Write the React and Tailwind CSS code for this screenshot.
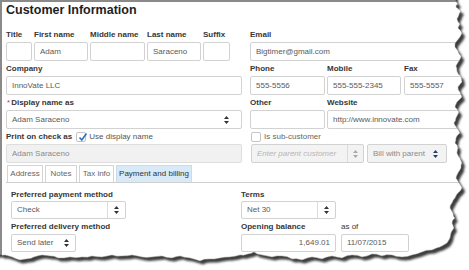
import React from "react";

const Arrows = ({ color = "#333" }) => (
  <svg width="5" height="8" viewBox="0 0 5 8">
    <path d="M2.5 0 L5 3 H0 Z M0 5 H5 L2.5 8 Z" fill={color} />
  </svg>
);

const Label = ({ children, className = "" }) => (
  <div className={"h-[11px] leading-[11px] text-[8px] font-bold text-[#363636] whitespace-nowrap " + className}>
    {children}
  </div>
);

const Input = ({ value = "", className = "", right = false }) => (
  <div
    className={
      "mt-[2px] h-[19px] border border-[#d2d2d2] rounded-[2px] px-[5px] flex items-center text-[8px] text-[#5a5a5a] whitespace-nowrap overflow-hidden " +
      (right ? "justify-end " : "") +
      className
    }
  >
    {value}
  </div>
);

const Field = ({ label, value, className = "", right }) => (
  <div className={"flex flex-col " + className}>
    <Label>{label}</Label>
    <Input value={value} right={right} />
  </div>
);

const Select = ({ value, className = "", sep = false, arrowW = "w-[17px]", arrowColor = "#333", textCls = "text-[#5a5a5a]", bg = "bg-white" }) => (
  <div className={"flex items-center border border-[#d2d2d2] rounded-[2px] overflow-hidden " + bg + " " + className}>
    <span className={"flex-1 pl-[5px] text-[8px] whitespace-nowrap " + textCls}>{value}</span>
    {sep && <div className="w-px self-stretch bg-[#dcdcdc]" />}
    <div className={"flex justify-center items-center " + arrowW}>
      <Arrows color={arrowColor} />
    </div>
  </div>
);

const Check = ({ checked }) => (
  <div className="w-[10px] h-[10px] border border-[#c4c4c4] rounded-[2px] bg-white relative">
    {checked && (
      <svg className="absolute left-[1px] top-[-1px]" width="10" height="10" viewBox="0 0 10 10">
        <path d="M1.5 5.5 L3.8 8 L8.5 1.5" stroke="#2f6fba" strokeWidth="1.6" fill="none" />
      </svg>
    )}
  </div>
);

const paperPts = [
  [455, 0], [458, 4], [456, 7], [461, 11], [459, 15], [457, 19], [460, 24], [458, 28], [462, 33], [460, 37],
  [456, 42], [455, 47], [458, 51], [461, 56], [459, 61], [456, 66], [457, 71], [461, 76], [462, 82], [458, 87],
  [460, 92], [462, 97], [457, 102], [455, 107], [459, 112], [456, 118], [454, 123], [457, 128], [460, 133],
  [456, 138], [455, 143], [458, 148], [457, 153], [460, 158], [462, 163], [461, 168], [458, 173], [456, 178],
  [459, 183], [462, 188], [458, 193], [455, 198], [452, 203], [450, 208], [453, 213], [455, 218], [452, 223],
  [454, 228], [451, 233], [450, 238], [447, 243], [440, 247], [432, 250], [422, 252], [412, 255], [402, 257],
  [392, 255], [382, 256], [372, 254], [362, 257], [352, 255], [342, 258], [332, 256], [322, 259], [312, 257],
  [302, 260], [292, 259], [282, 256], [272, 257], [262, 255], [254, 252], [248, 254], [240, 255], [230, 257],
  [220, 258], [210, 259], [200, 261], [190, 258], [180, 256], [172, 258], [162, 256], [152, 257], [142, 257],
  [132, 255], [122, 256], [112, 255], [102, 257], [92, 256], [82, 257], [70, 257], [58, 258], [50, 256],
  [42, 255], [34, 257], [26, 259], [20, 260], [12, 257], [5, 255], [0, 254],
];

function buildPath() {
  let seed = 7;
  const rnd = () => {
    seed = (seed * 9301 + 49297) % 233280;
    return seed / 233280 - 0.5;
  };
  const out = [];
  for (let i = 0; i < paperPts.length; i++) {
    const [x1, y1] = paperPts[i];
    out.push([x1, y1]);
    if (i < paperPts.length - 1) {
      const [x2, y2] = paperPts[i + 1];
      out.push([(x1 + x2) / 2 + rnd() * 1.6, (y1 + y2) / 2 + rnd() * 1.6]);
    }
  }
  let d = "M-6 -6 L455 -6 ";
  d += out.map(([x, y]) => `L${x.toFixed(1)} ${y.toFixed(1)}`).join(" ");
  d += " L-6 254 Z";
  return d;
}

const TornEdge = () => {
  const d = buildPath();
  return (
    <svg className="absolute left-0 top-0 pointer-events-none" width="469" height="270" viewBox="0 0 469 270">
      <defs>
        <mask id="outside">
          <rect x="0" y="0" width="469" height="270" fill="white" />
          <path d={d} fill="black" />
        </mask>
        <filter id="blur" x="-10%" y="-10%" width="120%" height="120%">
          <feGaussianBlur stdDeviation="1.3" />
        </filter>
      </defs>
      <g mask="url(#outside)">
        <rect x="0" y="0" width="469" height="270" fill="white" />
        <path d={d} fill="#3c3c3c" filter="url(#blur)" transform="translate(3 3.5)" />
      </g>
      <path d={d} fill="none" stroke="#9a9a9a" strokeWidth="0.5" />
    </svg>
  );
};

export default function App() {
  return (
    <div className="relative w-[469px] h-[270px] overflow-hidden bg-white [font-family:'Liberation_Sans',Arial,sans-serif]">
      <div className="h-full border-l-2 border-t-2 border-[#8a8a8a] pl-[4px] pt-[1px]">
        <div className="h-[15px] leading-[15px] text-[12.5px] font-bold text-[#1e1e1e] whitespace-nowrap">Customer Information</div>

        {/* Row 1 */}
        <div className="mt-[11px] flex">
          <div className="w-[236px] flex gap-[2px]">
            <Field label="Title" className="w-[26px]" />
            <Field label="First name" value="Adam" className="w-[54px]" />
            <Field label="Middle name" className="w-[55px]" />
            <Field label="Last name" value="Saraceno" className="w-[54px]" />
            <Field label="Suffix" className="w-[27px]" />
          </div>
          <Field label="Email" value="Bigtimer@gmail.com" className="ml-[8px] flex-1" />
        </div>

        {/* Row 2 */}
        <div className="mt-[2px] flex">
          <Field label="Company" value="InnoVate LLC" className="w-[236px]" />
          <div className="ml-[8px] flex-1 flex">
            <Field label="Phone" value="555-5556" className="w-[75px]" />
            <Field label="Mobile" value="555-555-2345" className="ml-[2px] w-[74px]" />
            <Field label="Fax" value="555-5557" className="ml-[3px] flex-1" />
          </div>
        </div>

        {/* Row 3 */}
        <div className="mt-[2px] flex">
          <div className="w-[236px] flex flex-col">
            <Label>
              <span className="text-[#d33] font-normal mr-[1px] ml-[1px]">*</span>Display name as
            </Label>
            <Select value="Adam Saraceno" className="mt-[2px] h-[19px]" arrowW="w-[30px]" />
          </div>
          <div className="ml-[8px] flex-1 flex">
            <Field label="Other" className="w-[75px]" />
            <Field label="Website" value="http://www.innovate.com" className="ml-[2px] flex-1" />
          </div>
        </div>

        {/* Row 4 */}
        <div className="mt-[2px] flex">
          <div className="w-[236px] flex flex-col">
            <div className="h-[11px] flex items-center">
              <Label>Print on check as</Label>
              <div className="ml-[4px]">
                <Check checked />
              </div>
              <span className="ml-[3px] text-[8px] text-[#555] leading-[11px]">Use display name</span>
            </div>
            <div className="mt-[2px] h-[19px] border border-[#dedede] rounded-[2px] bg-[#f1f1f1] px-[5px] flex items-center text-[8px] text-[#8a8a8a]">
              Adam Saraceno
            </div>
          </div>
          <div className="ml-[9px] flex flex-col">
            <div className="h-[11px] flex items-center">
              <Check />
              <span className="ml-[3px] text-[8px] text-[#666] leading-[11px]">Is sub-customer</span>
            </div>
            <div className="mt-[2px] h-[19px] flex">
              <Select
                value="Enter parent customer"
                className="w-[113px] h-full"
                sep
                arrowW="w-[15px]"
                arrowColor="#aaa"
                textCls="italic text-[#b5b5b5]"
                bg="bg-[#f3f3f3]"
              />
              <Select
                value="Bill with parent"
                className="ml-[3px] w-[80px] h-full"
                arrowW="w-[22px]"
                arrowColor="#25406e"
                textCls="text-[#8a8a8a]"
                bg="bg-[#f3f3f3]"
              />
            </div>
          </div>
        </div>

        {/* Tabs */}
        <div className="mt-[2px] h-[18px] flex items-end gap-[2px] pl-[1px] border-b border-[#cfcfcf]">
          <div className="w-[36px] h-full border border-b-0 border-[#d4d4d4] flex items-center justify-center text-[8px] text-[#666]">Address</div>
          <div className="w-[32px] h-full border border-b-0 border-[#d4d4d4] flex items-center justify-center text-[8px] text-[#666]">Notes</div>
          <div className="w-[35px] h-full border border-b-0 border-[#d4d4d4] flex items-center justify-center text-[8px] text-[#666]">Tax info</div>
          <div className="w-[76px] h-full border border-b-0 border-[#c9dcea] bg-[#d8eaf8] flex items-center justify-center text-[8px] text-[#333]">Payment and billing</div>
        </div>

        {/* Lower section */}
        <div className="pl-[5px] mt-[6px]">
          <div className="flex">
            <div className="w-[230px] flex flex-col">
              <Label>Preferred payment method</Label>
              <Select value="Check" className="mt-[1px] w-[115px] h-[18px]" sep arrowW="w-[17px]" />
            </div>
            <div className="flex flex-col">
              <Label>Terms</Label>
              <Select value="Net 30" className="mt-[1px] w-[95px] h-[18px]" sep arrowW="w-[17px]" />
            </div>
          </div>
          <div className="mt-[2px] flex">
            <div className="w-[230px] flex flex-col">
              <Label>Preferred delivery method</Label>
              <Select value="Send later" className="mt-[2px] w-[65px] h-[18px]" arrowW="w-[18px]" />
            </div>
            <div className="flex">
              <div className="flex flex-col w-[95px]">
                <Label>Opening balance</Label>
                <div className="mt-[2px] h-[18px] border border-[#d2d2d2] rounded-[2px] px-[5px] flex items-center justify-end text-[8px] text-[#5a5a5a]">1,649.01</div>
              </div>
              <div className="ml-[5px] flex flex-col w-[68px]">
                <Label className="font-normal">as of</Label>
                <div className="mt-[2px] h-[18px] border border-[#d2d2d2] rounded-[2px] px-[5px] flex items-center text-[8px] text-[#5a5a5a]">11/07/2015</div>
              </div>
            </div>
          </div>
        </div>
      </div>
      <TornEdge />
    </div>
  );
}
